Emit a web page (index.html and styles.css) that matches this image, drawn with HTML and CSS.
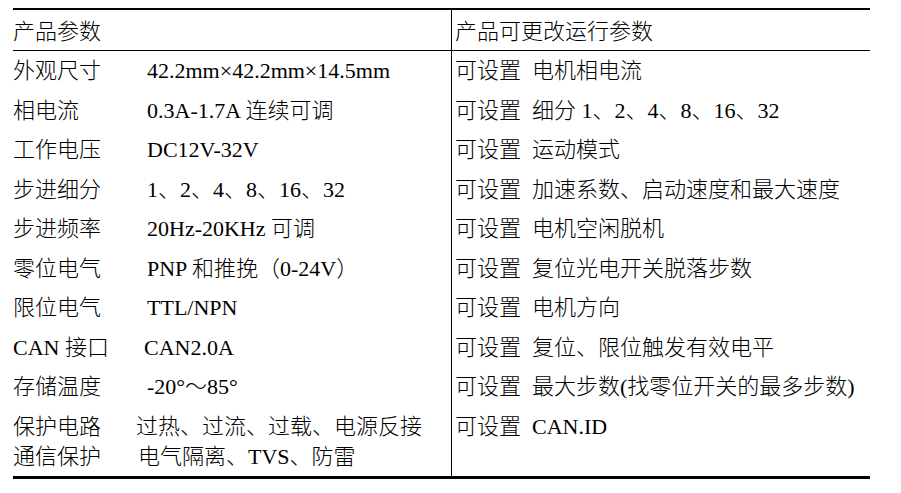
FILE: index.html
```html
<!DOCTYPE html>
<html lang="zh-CN">
<head>
<meta charset="utf-8">
<title>产品参数</title>
<link rel="stylesheet" href="styles.css">
</head>
<body>
<div class="sheet">
  <div class="cell head head-left">产品参数</div>
  <div class="cell head head-right">产品可更改运行参数</div>
  <div class="cell body-left">
    <div class="row"><span class="k">外观尺寸</span><span class="v">42.2mm×42.2mm×14.5mm</span></div>
    <div class="row"><span class="k">相电流</span><span class="v">0.3A-1.7A 连续可调</span></div>
    <div class="row"><span class="k">工作电压</span><span class="v">DC12V-32V</span></div>
    <div class="row"><span class="k">步进细分</span><span class="v">1、2、4、8、16、32</span></div>
    <div class="row"><span class="k">步进频率</span><span class="v">20Hz-20KHz 可调</span></div>
    <div class="row"><span class="k">零位电气</span><span class="v">PNP 和推挽（0-24V）</span></div>
    <div class="row"><span class="k">限位电气</span><span class="v">TTL/NPN</span></div>
    <div class="row"><span class="k k-can">CAN 接口</span><span class="v">CAN2.0A</span></div>
    <div class="row"><span class="k">存储温度</span><span class="v">-20°～85°</span></div>
    <div class="multi">
      <div class="line"><span class="k k-hot">保护电路</span><span class="v">过热、过流、过载、电源反接</span></div>
      <div class="line"><span class="k k-iso">通信保护</span><span class="v">电气隔离、TVS、防雷</span></div>
    </div>
  </div>
  <div class="cell body-right">
    <div class="row"><span class="tag">可设置</span><span class="v">电机相电流</span></div>
    <div class="row"><span class="tag">可设置</span><span class="v">细分 1、2、4、8、16、32</span></div>
    <div class="row"><span class="tag">可设置</span><span class="v">运动模式</span></div>
    <div class="row"><span class="tag">可设置</span><span class="v">加速系数、启动速度和最大速度</span></div>
    <div class="row"><span class="tag">可设置</span><span class="v">电机空闲脱机</span></div>
    <div class="row"><span class="tag">可设置</span><span class="v">复位光电开关脱落步数</span></div>
    <div class="row"><span class="tag">可设置</span><span class="v">电机方向</span></div>
    <div class="row"><span class="tag">可设置</span><span class="v">复位、限位触发有效电平</span></div>
    <div class="row"><span class="tag">可设置</span><span class="v">最大步数(找零位开关的最多步数)</span></div>
    <div class="row"><span class="tag">可设置</span><span class="v">CAN.ID</span></div>
  </div>
</div>
</body>
</html>
```
FILE: styles.css
```css
html, body {
  margin: 0;
  padding: 0;
  background: #ffffff;
}
body {
  font-family: "Liberation Serif", "Noto Sans CJK SC", serif;
  font-size: 22px;
  font-weight: 300;
  color: #000000;
}
.sheet {
  margin: 8px 0 0 13px;
  width: 857px;
  border-top: 2px solid #000;
  border-bottom: 3px solid #000;
  display: grid;
  grid-template-columns: 439px 1fr;
}
.cell {
  white-space: nowrap;
}
.head {
  height: 38.5px;
  padding-top: 1.5px;
  line-height: 40px;
  border-bottom: 1px solid #000;
}
.head-left,
.body-left {
  border-right: 1px solid #000;
}
.head-right {
  padding-left: 3px;
}
.body-right {
  padding-left: 3px;
}
.row {
  height: 39.5px;
  line-height: 40px;
  display: flex;
}
.k {
  display: inline-block;
  width: 134px;
  flex: none;
}
.k-can {
  width: 131px;
}
.k-hot {
  width: 123px;
}
.k-iso {
  width: 125px;
}
.multi {
  padding: 5.5px 0 4px 0;
}
.line {
  display: flex;
  height: 30px;
  line-height: 30px;
}
.tag {
  margin-right: 11px;
}
```
